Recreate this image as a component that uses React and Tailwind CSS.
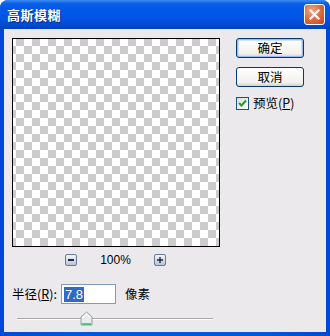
export default function App() {
  const font = { fontFamily: '"Noto Sans CJK SC", "Liberation Sans", sans-serif' };
  return (
    <div className="w-[330px] h-[336px] bg-white" style={font}>
      <div className="w-[330px] h-[336px] flex flex-col rounded-t-[8px] overflow-hidden bg-[#0055EA]">
        {/* Title bar */}
        <div className="h-[29px] shrink-0 flex items-center justify-between pl-[7px] pr-[5px] bg-[linear-gradient(to_bottom,#3D8DF5_0%,#0A5FE6_12%,#0258E8_30%,#0055E5_60%,#0049D0_88%,#003FB8_100%)]">
          <span className="text-white font-bold text-[13px] leading-none tracking-[0.5px] [text-shadow:1px_1px_0_#0A2B7A]">高斯模糊</span>
          <div className="w-[21px] h-[21px] rounded-[3px] border border-white flex items-center justify-center bg-[radial-gradient(circle_at_35%_30%,#F0A58A_0%,#E06A42_50%,#C44518_100%)]">
            <svg width="11" height="11" viewBox="0 0 11 11">
              <path d="M1.5 1.5 L9.5 9.5 M9.5 1.5 L1.5 9.5" stroke="white" strokeWidth="2.2" strokeLinecap="square" />
            </svg>
          </div>
        </div>
        {/* Body with borders */}
        <div className="flex-1 px-[4px] pb-[4px] bg-[linear-gradient(to_right,#0048D8,#0055E5_20%,#0055E5_80%,#0048D8)]">
          <div className="w-full h-full bg-[#ECE9ED] flex pl-[8px] pt-[9px] text-[12px] text-black">
            {/* Left column */}
            <div className="w-[208px] flex flex-col">
              <div className="w-[208px] h-[209px] border border-black bg-[repeating-conic-gradient(#CCCCCC_0_25%,#FFFFFF_0_50%)] bg-[length:16px_16px] bg-[position:-5px_-1px]" />
              <div className="mt-[6px] h-[13px] flex items-center pl-[53px]">
                <div className="w-[12px] h-[12px] rounded-[2px] border border-[#6A7A92] bg-[linear-gradient(to_bottom,#F4F6FA,#B8C3D6)] flex items-center justify-center">
                  <div className="w-[6px] h-[2px] bg-[#1D2A4A]" />
                </div>
                <span className="ml-[21px] w-[35px] text-[12px] leading-none text-center" style={{ fontFamily: '"Liberation Sans", sans-serif' }}>100%</span>
                <div className="ml-[21px] w-[12px] h-[12px] rounded-[2px] border border-[#6A7A92] bg-[linear-gradient(to_bottom,#F4F6FA,#B8C3D6)] flex items-center justify-center">
                  <svg width="6" height="6" viewBox="0 0 6 6"><path d="M3 0V6M0 3H6" stroke="#1D2A4A" strokeWidth="1.4" /></svg>
                </div>
              </div>
              <div className="mt-[18px] h-[20px] flex items-center">
                <span className="leading-none w-[49px] text-[12.5px]">半径(<span className="underline">R</span>):</span>
                <div className="w-[55px] h-[20px] border border-[#7F9DB9] bg-white flex items-center pl-[2px]">
                  <span className="bg-[#316AC5] text-white text-[13px] leading-[15px] px-[1px]" style={{ fontFamily: '"Liberation Sans", sans-serif' }}>7.8</span>
                </div>
                <span className="ml-[9px] leading-none text-[12.5px]">像素</span>
              </div>
              <div className="relative mt-[7px] h-[16px] ml-[5px] w-[196px]">
                <div className="absolute left-0 right-0 top-[7px] h-[1px] bg-[#A8A8A8]" />
                <div className="absolute left-0 right-0 top-[8px] h-[1px] bg-[#FFFFFF]" />
                <div className="absolute left-[63px] top-0">
                  <svg width="13" height="16" viewBox="0 0 13 16">
                    <path d="M1 6 L6.5 1 L12 6 L12 14 L1 14 Z" fill="#E8ECEE" stroke="#8AA49A" strokeWidth="1" />
                    <path d="M2 13 L11 13" stroke="#3FB55A" strokeWidth="1.5" />
                    <path d="M2 7 L6.5 3 L11 7" fill="none" stroke="#FFFFFF" strokeWidth="1" />
                  </svg>
                </div>
              </div>
            </div>
            {/* Right column */}
            <div className="ml-[16px] flex flex-col">
              <button className="w-[68px] h-[20px] rounded-[3px] border border-[#003C74] bg-[linear-gradient(to_bottom,#FFFFFF,#F2F1EC_80%,#D6D0C5)] shadow-[inset_0_0_0_1px_#9DB8F0,inset_0_0_0_2px_#CEE0FA] text-[12.5px] leading-none flex items-center justify-center">确定</button>
              <button className="mt-[9px] w-[68px] h-[20px] rounded-[3px] border border-[#003C74] bg-[linear-gradient(to_bottom,#FFFFFF,#F2F1EC_80%,#D6D0C5)] text-[12.5px] leading-none flex items-center justify-center">取消</button>
              <div className="mt-[10px] flex items-center">
                <div className="w-[13px] h-[13px] border border-[#1C5180] bg-[linear-gradient(135deg,#DCDCD7,#FFFFFF)] flex items-center justify-center">
                  <svg width="9" height="9" viewBox="0 0 9 9"><path d="M1 4 L3.5 6.5 L8 1.5" fill="none" stroke="#21A121" strokeWidth="2" /></svg>
                </div>
                <span className="ml-[4px] leading-none text-[12.5px]">预览(<span className="underline">P</span>)</span>
              </div>
            </div>
          </div>
        </div>
      </div>
    </div>
  );
}
